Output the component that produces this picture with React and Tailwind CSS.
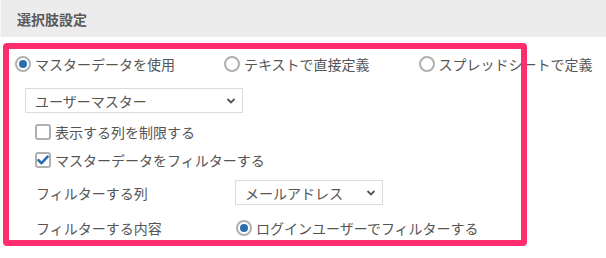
import React from "react";

function Radio({ checked }) {
  return (
    <span className="w-4 h-4 rounded-full border-2 border-[#b0b0b0] bg-white flex items-center justify-center shrink-0">
      {checked && <span className="w-2 h-2 rounded-full bg-[#2a6ead]"></span>}
    </span>
  );
}

function Checkbox({ checked }) {
  return (
    <span className="w-4 h-4 rounded-[3px] border-2 border-[#b0b0b0] bg-white flex items-center justify-center shrink-0">
      {checked && (
        <svg width="12" height="12" viewBox="0 0 12 12">
          <path d="M1.5 6.2 L4.6 9.2 L10.6 2.6" fill="none" stroke="#2a6ead" strokeWidth="2.6" strokeLinecap="round" strokeLinejoin="round" />
        </svg>
      )}
    </span>
  );
}

function Select({ value, width }) {
  return (
    <div className={"h-[25px] border border-[#dcdcdc] bg-white flex items-center justify-between pl-[9px] pr-[6px] " + width}>
      <span>{value}</span>
      <svg width="10" height="8" viewBox="0 0 10 8">
        <path d="M1.5 2 L5 5.5 L8.5 2" fill="none" stroke="#555" strokeWidth="1.8" />
      </svg>
    </div>
  );
}

function App() {
  return (
    <div className="relative w-[606px] h-[258px] bg-white overflow-hidden text-[14px] leading-[20px] text-[#555] font-['Noto_Sans_CJK_JP','Noto_Sans',sans-serif]">
      <div className="h-[37px] bg-[#ececec] border-l border-[#f6f6f6] pl-[16px] flex items-center font-bold text-[#5a5a5a]">
        選択肢設定
      </div>

      <div className="flex items-center gap-[49px] mt-[17px] pl-[15px] whitespace-nowrap">
        <label className="flex items-center gap-[4px]">
          <Radio checked />
          マスターデータを使用
        </label>
        <label className="flex items-center gap-[4px]">
          <Radio />
          テキストで直接定義
        </label>
        <label className="flex items-center gap-[4px]">
          <Radio />
          スプレッドシートで定義
        </label>
      </div>

      <div className="mt-[14px] pl-[25px]">
        <Select value="ユーザーマスター" width="w-[218px]" />
      </div>

      <label className="flex items-center gap-[4px] mt-[9px] pl-[35px]">
        <Checkbox />
        表示する列を制限する
      </label>
      <label className="flex items-center gap-[4px] mt-[8px] pl-[35px]">
        <Checkbox checked />
        マスターデータをフィルターする
      </label>

      <div className="flex items-center mt-[10px] pl-[36px]">
        <span className="w-[199px]">フィルターする列</span>
        <Select value="メールアドレス" width="w-[148px]" />
      </div>

      <div className="flex items-center mt-[13px] pl-[36px]">
        <span className="w-[200px]">フィルターする内容</span>
        <label className="flex items-center gap-[4px]">
          <Radio checked />
          ログインユーザーでフィルターする
        </label>
      </div>

      {/* highlight box drawn over the form */}
      <div className="absolute left-[3px] top-[43px] w-[524px] h-[203px] border-[6px] border-[#ff2d6e] rounded-[4px] pointer-events-none"></div>
    </div>
  );
}

export default App;
